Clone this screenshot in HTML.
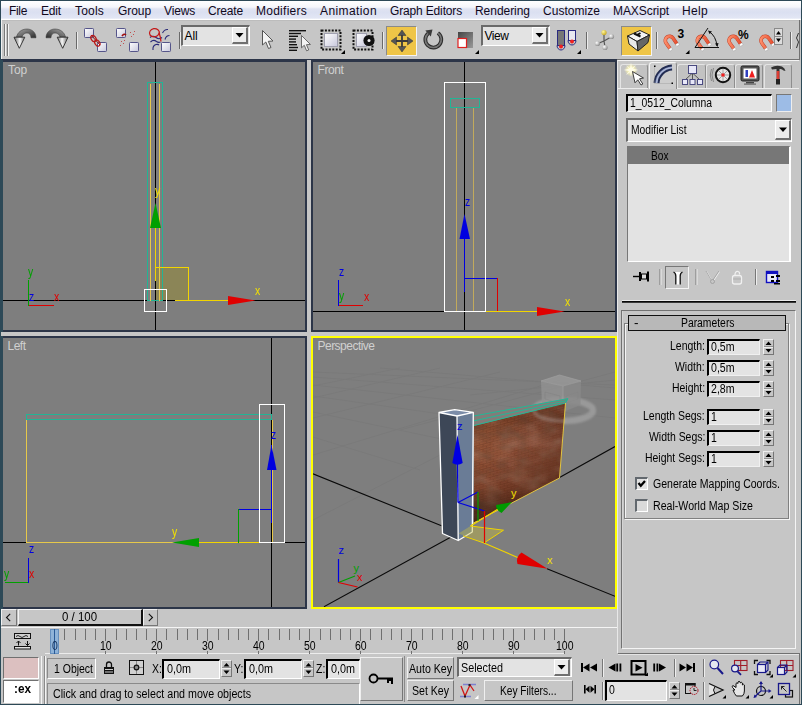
<!DOCTYPE html>
<html><head><meta charset="utf-8"><title>3ds Max</title>
<style>
html,body{margin:0;padding:0}
body{width:802px;height:705px;overflow:hidden;position:relative;background:#c6c6c6;font-family:"Liberation Sans",sans-serif}
.a{position:absolute}
.t{position:absolute;white-space:nowrap;line-height:normal}
svg{position:absolute;overflow:visible}
</style></head><body>

<div class="a" style="left:1px;top:1px;width:800px;height:19px;background:linear-gradient(#ffffff 0%,#f5f6fb 32%,#dfe3f2 42%,#dbe0f1 60%,#e2e6f4 90%,#ffffff 97%);"></div>
<span class="t" style="left:9.0px;top:4px;font-size:12px;color:#10081c;letter-spacing:-0.336px;">File</span>
<span class="t" style="left:41.0px;top:4px;font-size:12px;color:#10081c;letter-spacing:-0.168px;">Edit</span>
<span class="t" style="left:75.0px;top:4px;font-size:12px;color:#10081c;letter-spacing:0.197px;">Tools</span>
<span class="t" style="left:118.0px;top:4px;font-size:12px;color:#10081c;letter-spacing:-0.069px;">Group</span>
<span class="t" style="left:164.0px;top:4px;font-size:12px;color:#10081c;letter-spacing:-0.159px;">Views</span>
<span class="t" style="left:208.0px;top:4px;font-size:12px;color:#10081c;letter-spacing:-0.169px;">Create</span>
<span class="t" style="left:256.0px;top:4px;font-size:12px;color:#10081c;letter-spacing:0.257px;">Modifiers</span>
<span class="t" style="left:320.0px;top:4px;font-size:12px;color:#10081c;letter-spacing:0.405px;">Animation</span>
<span class="t" style="left:390.0px;top:4px;font-size:12px;color:#10081c;letter-spacing:-0.155px;">Graph Editors</span>
<span class="t" style="left:475.0px;top:4px;font-size:12px;color:#10081c;letter-spacing:-0.042px;">Rendering</span>
<span class="t" style="left:543.0px;top:4px;font-size:12px;color:#10081c;letter-spacing:0.035px;">Customize</span>
<span class="t" style="left:613.0px;top:4px;font-size:12px;color:#10081c;letter-spacing:-0.075px;">MAXScript</span>
<span class="t" style="left:682.0px;top:4px;font-size:12px;color:#10081c;letter-spacing:0.328px;">Help</span>
<div class="a" style="left:1px;top:20px;width:799px;height:39px;background:#c6c6c6;"></div>
<div class="a" style="left:1px;top:20px;width:799px;height:1px;background:#bcbcbc;"></div>
<div class="a" style="left:1px;top:20px;width:1px;height:39px;background:#f0f0f0;"></div>
<div class="a" style="left:799px;top:20px;width:1px;height:40px;background:#707070;"></div>
<div class="a" style="left:1px;top:59px;width:799px;height:1px;background:#707070;"></div>
<div class="a" style="left:4px;top:24px;width:1px;height:32px;background:#7a7a7a;"></div>
<div class="a" style="left:5px;top:24px;width:1px;height:32px;background:#f4f4f4;"></div>
<div class="a" style="left:7px;top:24px;width:1px;height:32px;background:#7a7a7a;"></div>
<div class="a" style="left:8px;top:24px;width:1px;height:32px;background:#f4f4f4;"></div>
<div class="a" style="left:76px;top:32px;width:1px;height:17px;background:#6a6a6a;"></div>
<div class="a" style="left:77px;top:32px;width:1px;height:17px;background:#ececec;"></div>
<div class="a" style="left:179px;top:32px;width:1px;height:17px;background:#6a6a6a;"></div>
<div class="a" style="left:180px;top:32px;width:1px;height:17px;background:#ececec;"></div>
<div class="a" style="left:382px;top:32px;width:1px;height:17px;background:#6a6a6a;"></div>
<div class="a" style="left:383px;top:32px;width:1px;height:17px;background:#ececec;"></div>
<div class="a" style="left:586px;top:32px;width:1px;height:17px;background:#6a6a6a;"></div>
<div class="a" style="left:587px;top:32px;width:1px;height:17px;background:#ececec;"></div>
<div class="a" style="left:656px;top:32px;width:1px;height:17px;background:#6a6a6a;"></div>
<div class="a" style="left:657px;top:32px;width:1px;height:17px;background:#ececec;"></div>
<div class="a" style="left:790px;top:32px;width:1px;height:17px;background:#6a6a6a;"></div>
<div class="a" style="left:791px;top:32px;width:1px;height:17px;background:#ececec;"></div>
<div class="a" style="left:386px;top:26px;width:31px;height:30px;background:#efc547;box-sizing:border-box;border-top:1px solid #8a8a8a;border-left:1px solid #8a8a8a;border-right:1px solid #f4f4f4;border-bottom:1px solid #f4f4f4"></div>
<div class="a" style="left:621px;top:26px;width:31px;height:30px;background:#efc547;box-sizing:border-box;border-top:1px solid #8a8a8a;border-left:1px solid #8a8a8a;border-right:1px solid #f4f4f4;border-bottom:1px solid #f4f4f4"></div>
<div class="a" style="left:181px;top:25px;width:69px;height:21px;background:#e3e3e3;box-sizing:border-box;border-top:2px solid #6a6a6a;border-left:2px solid #6a6a6a;border-right:1px solid #fff;border-bottom:1px solid #fff"></div>
<div class="a" style="left:232px;top:27px;width:16px;height:17px;background:#ececec;box-sizing:border-box;border-top:1px solid #fff;border-left:1px solid #fff;border-right:2px solid #707070;border-bottom:2px solid #707070"></div>
<svg style="left:232px;top:27px" width="16" height="17"><path d="M3.5 6.0h8l-4 4.5z" fill="#000"/></svg>
<span class="t" style="left:184.5px;top:29px;font-size:12px;color:#000;letter-spacing:-0.115px;">All</span>
<div class="a" style="left:481px;top:25px;width:69px;height:21px;background:#e3e3e3;box-sizing:border-box;border-top:2px solid #6a6a6a;border-left:2px solid #6a6a6a;border-right:1px solid #fff;border-bottom:1px solid #fff"></div>
<div class="a" style="left:532px;top:27px;width:16px;height:17px;background:#ececec;box-sizing:border-box;border-top:1px solid #fff;border-left:1px solid #fff;border-right:2px solid #707070;border-bottom:2px solid #707070"></div>
<svg style="left:532px;top:27px" width="16" height="17"><path d="M3.5 6.0h8l-4 4.5z" fill="#000"/></svg>
<span class="t" style="left:484.5px;top:29px;font-size:12px;color:#000;letter-spacing:-0.449px;">View</span>
<svg style="left:0;top:0" width="802" height="705" viewBox="0 0 802 705" >
<defs>
<linearGradient id="gArr" x1="1" y1="1" x2="0" y2="0"><stop offset="0" stop-color="#2a2a2a"/><stop offset=".35" stop-color="#555"/><stop offset="1" stop-color="#a8a8a8"/></linearGradient>
<linearGradient id="gArrH" x1="0" y1="0" x2="1" y2="0"><stop offset="0" stop-color="#6a6a6a"/><stop offset=".55" stop-color="#f6f6f6"/><stop offset="1" stop-color="#707070"/></linearGradient>
<linearGradient id="gBox" x1="0" y1="0" x2="1" y2="1"><stop offset="0" stop-color="#fff"/><stop offset="1" stop-color="#c8c8dc"/></linearGradient>
<linearGradient id="gMag" x1="0" y1="0" x2="1" y2="1"><stop offset="0" stop-color="#ff9470"/><stop offset="1" stop-color="#e85030"/></linearGradient>
<radialGradient id="gBall" cx=".35" cy=".35" r=".7"><stop offset="0" stop-color="#fff"/><stop offset="1" stop-color="#888"/></radialGradient>
<radialGradient id="gBallY" cx=".35" cy=".35" r=".7"><stop offset="0" stop-color="#fff8a0"/><stop offset="1" stop-color="#c8a820"/></radialGradient>
<linearGradient id="gScale" x1="0" y1="0" x2="1" y2="1"><stop offset="0" stop-color="#444"/><stop offset="1" stop-color="#9a9a9a"/></linearGradient>
</defs>
<g><path d="M36 37.800 C36 32.500 32 29 27 29 C21.500 29 17.500 32.500 16.500 37 L22 37.200 C22.500 34.600 24.500 33 27 33 C29.500 33 31 35 31 37.800 Z" fill="url(#gArr)" stroke="#333" stroke-width=".5"/><path d="M14 37.200 L24.800 37.200 L19.300 48.300 Z" fill="url(#gArrH)" stroke="#2a2a2a" stroke-width=".9" stroke-linejoin="round"/></g>
<g transform="translate(82,0) scale(-1,1)"><path d="M36 37.800 C36 32.500 32 29 27 29 C21.500 29 17.500 32.500 16.500 37 L22 37.200 C22.500 34.600 24.500 33 27 33 C29.500 33 31 35 31 37.800 Z" fill="url(#gArr)" stroke="#333" stroke-width=".5"/><path d="M14 37.200 L24.800 37.200 L19.300 48.300 Z" fill="url(#gArrH)" stroke="#2a2a2a" stroke-width=".9" stroke-linejoin="round"/></g>
<rect x="84.5" y="28.5" width="9" height="9" fill="url(#gBox)" stroke="#55558a" stroke-width="1" rx=".8"/>
<rect x="97.5" y="42.5" width="9" height="9" fill="url(#gBox)" stroke="#55558a" stroke-width="1" rx=".8"/>
<path d="M91 35 l9 10" stroke="#8a1010" stroke-width="1" fill="none"/><ellipse cx="93.500" cy="38.500" rx="2.300" ry="3.400" transform="rotate(-35 93.5 38.5)" fill="none" stroke="#b81818" stroke-width="1.200"/><ellipse cx="97.300" cy="43" rx="2.300" ry="3.400" transform="rotate(-35 97.3 43)" fill="none" stroke="#b81818" stroke-width="1.200"/>
<rect x="116.5" y="28.5" width="9" height="9" fill="url(#gBox)" stroke="#55558a" stroke-width="1" rx=".8"/>
<rect x="129.5" y="42.5" width="9" height="9" fill="url(#gBox)" stroke="#55558a" stroke-width="1" rx=".8"/>
<path d="M122 36 q2 -3 4 -1" stroke="#a01010" stroke-width="1.6" fill="none"/><g fill="#c05050"><rect x="130" y="32" width="1" height="1"/><rect x="133" y="34" width="1" height="1"/><rect x="131" y="36" width="1" height="1"/><rect x="134" y="31" width="1" height="1"/><rect x="121" y="41" width="1" height="1"/><rect x="123" y="43" width="1" height="1"/><rect x="120" y="45" width="1" height="1"/><rect x="124" y="40" width="1" height="1"/></g>
<g fill="none" stroke="#2a2a78" stroke-width="1.100"><path d="M150 37.500 q3 -2.500 6 0 t6 0"/><path d="M150.500 42 q3 -3 6 -.5 q2 1.500 4 .5"/><path d="M153 50 q-.5 -4.500 3 -5.500 q2 -.5 3 .5"/><path d="M162.500 33 q2 -4 5.500 -3.500"/><path d="M165 39.500 q1 -4 4.500 -4"/></g><path d="M159.500 33.500 a5 4.500 0 1 0 -9.500 1.500 a5 4.500 0 0 0 9 -2.500 q1.500 4.500 2 9" fill="none" stroke="#c41818" stroke-width="1.200"/>
<rect x="161.5" y="42.5" width="9" height="9" fill="url(#gBox)" stroke="#55558a" stroke-width="1" rx=".8"/>
<path transform="translate(262.5,30.5) scale(1.0)" d="M0 0 L0 14.500 L3.300 11.500 L6 18 L8.500 17 L5.800 10.800 L10.500 10.500 Z" fill="#f4f4f4" stroke="#555" stroke-width="1"/>
<g fill="#111"><rect x="289" y="30" width="17" height="1.4"/><rect x="289" y="32.8" width="12" height="1.4"/><rect x="289" y="35.6" width="9" height="1.4"/><rect x="289" y="38.4" width="7" height="1.4"/><rect x="289" y="41.2" width="7" height="1.4"/><rect x="289" y="44" width="8" height="1.4"/><rect x="289" y="46.8" width="9" height="1.4"/><rect x="289" y="49.6" width="8" height="1.4"/></g>
<path transform="translate(301.5,35.5) scale(0.85)" d="M0 0 L0 14.500 L3.300 11.500 L6 18 L8.500 17 L5.800 10.800 L10.500 10.500 Z" fill="#f4f4f4" stroke="#555" stroke-width="1"/>
<rect x="321.5" y="30.5" width="19" height="19" fill="none" stroke="#111" stroke-width="2" stroke-dasharray="2 1.4"/>
<rect x="324.5" y="33.5" width="13" height="13" fill="url(#gBox)" stroke="#a0a0b0"/>
<path d="M345 50 v4 h-4 z" fill="#000"/>
<rect x="353.5" y="30.5" width="19" height="19" fill="none" stroke="#111" stroke-width="2" stroke-dasharray="2 1.4"/>
<rect x="356.5" y="33.5" width="10" height="13" fill="url(#gBox)" stroke="#a0a0b0"/>
<circle cx="369" cy="40.500" r="5.600" fill="#111"/><circle cx="369" cy="40.500" r="1.500" fill="#f0f0f0"/>
<g fill="#555" stroke="#333" stroke-width=".5"><path d="M402 30 l4 5.500 h-8z"/><path d="M402 52 l4 -5.500 h-8z"/><path d="M391 41 l5.500 -4 v8z"/><path d="M413 41 l-5.500 -4 v8z"/></g><path d="M402 35 v12 M396 41 h12" stroke="#3a3a3a" stroke-width="1.8"/>
<path d="M437.900 33 A8 8 0 1 1 428.200 33.400" fill="none" stroke="#2e2e2e" stroke-width="3.800"/><path d="M437.900 33 A8 8 0 1 1 428.200 33.400" fill="none" stroke="#777" stroke-width="1.600"/><path d="M432.500 29.600 L430.800 36.600 L425.300 30.600 Z" fill="#3a3a3a"/>
<rect x="458" y="32" width="15" height="16" fill="url(#gScale)"/><rect x="458" y="38.500" width="8.500" height="9" fill="#fff" stroke="#e02020" stroke-width="1.2"/>
<path d="M479 50 v4 h-4 z" fill="#000"/>
<rect x="557.500" y="30.500" width="7" height="15" fill="#777" stroke="#2a2a80"/><path d="M557 45.500 a4 4.500 0 0 0 8 0" fill="none" stroke="#2a2a80"/><circle cx="561" cy="46.500" r="2" fill="#f02020"/>
<rect x="568.500" y="30.500" width="7" height="10" fill="#e8e8f0" stroke="#2a2a80"/><path d="M568 40.500 a4 4.500 0 0 0 8 0" fill="none" stroke="#2a2a80"/><circle cx="572" cy="41.500" r="2" fill="#f02020"/>
<path d="M581 50 v4 h-4 z" fill="#000"/>
<path d="M604 41 L604 33 M604 41 L611 37 M604 41 L598 43.500 M604 41 L605 47" stroke="#555" stroke-width="1.2"/><circle cx="604" cy="32.500" r="2.600" fill="url(#gBallY)"/><circle cx="611.500" cy="36.500" r="2.600" fill="url(#gBall)"/><circle cx="597.500" cy="43.500" r="2.600" fill="url(#gBall)"/><circle cx="605" cy="47.500" r="2.600" fill="url(#gBall)"/>
<path d="M627.500 36 L640 30.500 L649.500 35 L637 41.500 Z" fill="#f4f4f4" stroke="#222" stroke-width="1"/><path d="M627.500 36 L637 41.500 L638 51 L629 44 Z" fill="#e8e8e8" stroke="#222"/><path d="M637 41.500 L649.500 35 L648 42.500 L638 51 Z" fill="#666" stroke="#222"/><path d="M634 33.500 l6.500 3 M637 35 l3.500 -2" stroke="#111" stroke-width="2"/>
<g transform="translate(669.5,40.5) rotate(-35)"><path d="M-4.200 6.800 V0 A4.200 4.200 0 0 1 4.200 0 V6.800" fill="none" stroke="#c04028" stroke-width="3.600"/><path d="M-4.200 6.800 V0 A4.200 4.200 0 0 1 4.200 0 V6.800" fill="none" stroke="url(#gMag)" stroke-width="2.600"/><rect x="-5.800" y="6.800" width="3.200" height="2.200" fill="#fff" stroke="#888" stroke-width=".3"/><rect x="2.600" y="6.800" width="3.200" height="2.200" fill="#fff" stroke="#888" stroke-width=".3"/></g>
<text x="677.5" y="38" font-size="12" fill="#000" font-weight="bold" >3</text>
<path d="M689.500 50 v4 h-4 z" fill="#000"/>
<g transform="translate(701.5,40.5) rotate(-35)"><path d="M-4.200 6.800 V0 A4.200 4.200 0 0 1 4.200 0 V6.800" fill="none" stroke="#c04028" stroke-width="3.600"/><path d="M-4.200 6.800 V0 A4.200 4.200 0 0 1 4.200 0 V6.800" fill="none" stroke="url(#gMag)" stroke-width="2.600"/><rect x="-5.800" y="6.800" width="3.200" height="2.200" fill="#fff" stroke="#888" stroke-width=".3"/><rect x="2.600" y="6.800" width="3.200" height="2.200" fill="#fff" stroke="#888" stroke-width=".3"/></g>
<path d="M695 47.500 H719 M695 47.500 L708 28" stroke="#111" stroke-width="1" fill="none"/><path d="M709 31.500 Q716 36 717 46" stroke="#111" fill="none"/><path d="M708 30.500 l4 1 l-2.500 2.500z M717.500 47 l-2.500 -3.500 l3.500 -.5z" fill="#111"/>
<g transform="translate(733.2,40.5) rotate(-35)"><path d="M-4.200 6.800 V0 A4.200 4.200 0 0 1 4.200 0 V6.800" fill="none" stroke="#c04028" stroke-width="3.600"/><path d="M-4.200 6.800 V0 A4.200 4.200 0 0 1 4.200 0 V6.800" fill="none" stroke="url(#gMag)" stroke-width="2.600"/><rect x="-5.800" y="6.800" width="3.200" height="2.200" fill="#fff" stroke="#888" stroke-width=".3"/><rect x="2.600" y="6.800" width="3.200" height="2.200" fill="#fff" stroke="#888" stroke-width=".3"/></g>
<text x="738" y="39" font-size="12" fill="#000" font-weight="bold" >%</text>
<g transform="translate(765.2,40.5) rotate(-35)"><path d="M-4.200 6.800 V0 A4.200 4.200 0 0 1 4.200 0 V6.800" fill="none" stroke="#c04028" stroke-width="3.600"/><path d="M-4.200 6.800 V0 A4.200 4.200 0 0 1 4.200 0 V6.800" fill="none" stroke="url(#gMag)" stroke-width="2.600"/><rect x="-5.800" y="6.800" width="3.200" height="2.200" fill="#fff" stroke="#888" stroke-width=".3"/><rect x="2.600" y="6.800" width="3.200" height="2.200" fill="#fff" stroke="#888" stroke-width=".3"/></g>
<rect x="774" y="28" width="9" height="17" fill="#8a8a8a"/><rect x="775" y="29" width="7" height="7" fill="#ddd"/><rect x="775" y="37" width="7" height="7" fill="#ddd"/><path d="M776 34.500 h5 l-2.500 -3.500z M776 38.500 h5 l-2.500 3.500z" fill="#000"/>
<path d="M798.500 33 l-2 5 l2 4 l-2 6" stroke="#333" fill="none"/>
</svg>
<div class="a" style="left:0px;top:59px;width:307px;height:273px;background:#2c3548;"></div>
<div class="a" style="left:3px;top:62px;width:302px;height:268px;background:#7e7e7e;"></div>
<div class="a" style="left:311px;top:59px;width:306px;height:273px;background:#2c3548;"></div>
<div class="a" style="left:313px;top:62px;width:302px;height:268px;background:#7e7e7e;"></div>
<div class="a" style="left:0px;top:336px;width:307px;height:273px;background:#2c3548;"></div>
<div class="a" style="left:3px;top:338px;width:302px;height:269px;background:#7e7e7e;"></div>
<div class="a" style="left:311px;top:336px;width:306px;height:273px;background:#ffff00;"></div>
<div class="a" style="left:313px;top:338px;width:302px;height:269px;background:#7e7e7e;"></div>
<div class="a" style="left:0px;top:59px;width:3px;height:550px;background:#2d4957;"></div>
<div class="a" style="left:1px;top:59px;width:616px;height:1px;background:#2c3548;"></div>
<div class="a" style="left:1px;top:332px;width:2px;height:4px;background:#c6c6c6;"></div>
<span class="t" style="left:8.0px;top:63px;font-size:12px;color:#d0d0d0;letter-spacing:-0.115px;">Top</span>
<span class="t" style="left:317.5px;top:63px;font-size:12px;color:#d0d0d0;letter-spacing:-0.400px;">Front</span>
<span class="t" style="left:7.5px;top:339px;font-size:12px;color:#d0d0d0;letter-spacing:-0.500px;">Left</span>
<span class="t" style="left:317.5px;top:339px;font-size:12px;color:#d0d0d0;letter-spacing:-0.517px;">Perspective</span>
<svg style="left:0;top:0" width="802" height="705" viewBox="0 0 802 705" shape-rendering="crispEdges">
<rect x="155" y="62" width="1" height="268" fill="#000"/>
<rect x="3" y="300" width="302" height="1" fill="#000"/>
<rect x="156" y="268" width="32" height="32" fill="#8b8557"/>
<rect x="147.5" y="82.5" width="15" height="218" fill="none" stroke="#22b595" stroke-width="1"/>
<rect x="150" y="84" width="1" height="217" fill="#e6c84a"/>
<rect x="159" y="84" width="1" height="217" fill="#e6c84a"/>
<rect x="155" y="228" width="1" height="53" fill="#f2d500"/>
<rect x="155" y="267" width="34" height="1" fill="#f2d500"/>
<rect x="188" y="267" width="1" height="34" fill="#f2d500"/>
<rect x="175" y="300" width="53" height="1" fill="#f2d500"/>
<rect x="144.5" y="289.5" width="22" height="22" fill="none" stroke="#fff" stroke-width="1"/>
<path d="M155.500 203 L150 228 H161 Z" fill="#00a000" shape-rendering="auto"/>
<path d="M255.500 300.500 L228 296 V305 Z" fill="#e00000" shape-rendering="auto"/>
<rect x="28" y="280" width="1" height="26" fill="#00a000"/>
<rect x="29" y="305" width="25" height="1" fill="#e00000"/>
<rect x="464" y="62" width="1" height="268" fill="#000"/>
<rect x="313" y="311" width="302" height="1" fill="#000"/>
<rect x="456" y="107" width="1" height="205" fill="#c2aa5c"/>
<rect x="473" y="107" width="1" height="205" fill="#c2aa5c"/>
<rect x="450.5" y="98.5" width="29" height="9" fill="none" stroke="#22b595" stroke-width="1"/>
<rect x="464" y="238" width="1" height="54" fill="#0000e0"/>
<rect x="464" y="278" width="34" height="1" fill="#0000e0"/>
<rect x="497" y="278" width="1" height="34" fill="#e00000"/>
<rect x="485" y="311" width="53" height="1" fill="#f2d500"/>
<rect x="444.5" y="82.5" width="41" height="229" fill="none" stroke="#fff" stroke-width="1"/>
<path d="M464.500 214 L459.500 239 H470 Z" fill="#0000e0" shape-rendering="auto"/>
<path d="M564.500 311.500 L537 307 V316 Z" fill="#e00000" shape-rendering="auto"/>
<rect x="338" y="280" width="1" height="26" fill="#0000e0"/>
<rect x="339" y="305" width="24" height="1" fill="#e00000"/>
<rect x="271" y="338" width="1" height="269" fill="#000"/>
<rect x="3" y="542" width="302" height="1" fill="#000"/>
<rect x="26" y="542" width="233" height="1" fill="#e6c84a"/>
<rect x="26" y="420" width="1" height="123" fill="#e6c84a"/>
<rect x="272" y="420" width="1" height="123" fill="#e6c84a"/>
<rect x="26.5" y="414.5" width="245" height="5" fill="none" stroke="#22b595" stroke-width="1"/>
<rect x="199" y="542" width="61" height="1" fill="#f2d500"/>
<rect x="271" y="445" width="1" height="78" fill="#0000e0"/>
<rect x="238" y="509" width="34" height="1" fill="#0000e0"/>
<rect x="238" y="509" width="1" height="34" fill="#00a000"/>
<rect x="259.5" y="404.5" width="25" height="138" fill="none" stroke="#fff" stroke-width="1"/>
<path d="M271.500 445 L267 470 H276.500 Z" fill="#0000e0" shape-rendering="auto"/>
<path d="M172 542.500 L199 538 V547 Z" fill="#00a000" shape-rendering="auto"/>
<rect x="28" y="558" width="1" height="25" fill="#0000e0"/>
<rect x="5" y="582" width="23" height="1" fill="#00a000"/>
</svg>
<span class="t" style="left:155.0px;top:184px;font-size:12px;color:#f2e000;transform:scaleX(0.8708);transform-origin:0 0;">y</span>
<span class="t" style="left:254.5px;top:284px;font-size:12px;color:#f2e000;transform:scaleX(0.8708);transform-origin:0 0;">x</span>
<span class="t" style="left:28.0px;top:265px;font-size:12px;color:#00a000;transform:scaleX(0.8708);transform-origin:0 0;">y</span>
<span class="t" style="left:28.5px;top:290px;font-size:12px;color:#0000e0;transform:scaleX(0.8708);transform-origin:0 0;">z</span>
<span class="t" style="left:53.5px;top:290px;font-size:12px;color:#e00000;transform:scaleX(0.8708);transform-origin:0 0;">x</span>
<span class="t" style="left:464.5px;top:195px;font-size:12px;color:#0000e0;transform:scaleX(0.8708);transform-origin:0 0;">z</span>
<span class="t" style="left:564.5px;top:295px;font-size:12px;color:#f2e000;transform:scaleX(0.8708);transform-origin:0 0;">x</span>
<span class="t" style="left:338.5px;top:265px;font-size:12px;color:#0000e0;transform:scaleX(0.8708);transform-origin:0 0;">z</span>
<span class="t" style="left:339.0px;top:289px;font-size:12px;color:#00a000;transform:scaleX(0.8708);transform-origin:0 0;">y</span>
<span class="t" style="left:363.5px;top:290px;font-size:12px;color:#e00000;transform:scaleX(0.8708);transform-origin:0 0;">x</span>
<span class="t" style="left:270.5px;top:428px;font-size:12px;color:#0000e0;transform:scaleX(0.8708);transform-origin:0 0;">z</span>
<span class="t" style="left:171.5px;top:525px;font-size:12px;color:#f2e000;transform:scaleX(0.8708);transform-origin:0 0;">y</span>
<span class="t" style="left:28.5px;top:542px;font-size:12px;color:#0000e0;transform:scaleX(0.8708);transform-origin:0 0;">z</span>
<span class="t" style="left:4.0px;top:567px;font-size:12px;color:#00a000;transform:scaleX(0.8708);transform-origin:0 0;">y</span>
<span class="t" style="left:28.5px;top:567px;font-size:12px;color:#e00000;transform:scaleX(0.8708);transform-origin:0 0;">x</span>
<svg style="left:313px;top:338px;overflow:hidden" width="302" height="269" viewBox="313 338 302 269">
<defs>
<linearGradient id="gWall" x1="474" y1="430" x2="560" y2="500" gradientUnits="userSpaceOnUse"><stop offset="0" stop-color="#93502f"/><stop offset=".4" stop-color="#874830"/><stop offset=".75" stop-color="#6c3622"/><stop offset="1" stop-color="#5a2c1a"/></linearGradient>
<linearGradient id="gWallShade" x1="474" y1="420" x2="474" y2="525" gradientUnits="userSpaceOnUse"><stop offset="0" stop-color="#000" stop-opacity=".12"/><stop offset=".3" stop-color="#fff" stop-opacity=".03"/><stop offset=".65" stop-color="#000" stop-opacity=".05"/><stop offset="1" stop-color="#1a0600" stop-opacity=".6"/></linearGradient>
<pattern id="pBrick" width="7" height="5" patternUnits="userSpaceOnUse" patternTransform="matrix(1 -0.26 0 1 474 426)"><rect width="7" height="5" fill="none"/><path d="M0 .5H7 M0 3H7 M2 .5V3 M5.500 3V5" stroke="#5e2c18" stroke-width=".7" stroke-opacity=".55"/></pattern>
<filter id="fBlur" x="-20%" y="-20%" width="140%" height="140%"><feGaussianBlur stdDeviation="1.200"/></filter>
<filter id="fBlur2" x="-20%" y="-20%" width="140%" height="140%"><feGaussianBlur stdDeviation="2.500"/></filter>
<filter id="fGrunge" x="0" y="0" width="100%" height="100%"><feTurbulence type="fractalNoise" baseFrequency="0.07 0.1" numOctaves="3" seed="11"/><feColorMatrix type="matrix" values="0 0 0 0 0.16  0 0 0 0 0.06  0 0 0 0 0.03  0 0 0 1.8 -0.72"/><feComposite in2="SourceAlpha" operator="in"/></filter>
<filter id="fGrungeL" x="0" y="0" width="100%" height="100%"><feTurbulence type="fractalNoise" baseFrequency="0.05 0.08" numOctaves="2" seed="3"/><feColorMatrix type="matrix" values="0 0 0 0 0.78  0 0 0 0 0.55  0 0 0 0 0.45  0 0 0 1.8 -0.8"/><feComposite in2="SourceAlpha" operator="in"/></filter>
</defs>
<g stroke="#777777" stroke-width="1" fill="none" opacity=".55">
<path d="M313 437L420 470"/>
<path d="M313 412L470 445"/>
<path d="M313 396L540 428"/>
<path d="M313 385L615 418"/>
<path d="M313 377L615 400"/>
<path d="M380 368L615 388"/>
<path d="M313 372L615 385"/>
<path d="M313 520L440 455"/>
<path d="M313 455L560 380"/>
<path d="M313 418L500 372"/>
<path d="M313 398L440 368"/>
<path d="M400 430L615 372"/>
<path d="M470 395L615 380"/>
<path d="M313 386L400 368"/>
</g>
<path d="M313 473.800 L441.500 525.800 M547 568.700 L615 596.300" stroke="#0a0a0a" stroke-width="1.100" fill="none"/>
<path d="M324 606.700 L451 537 M559.500 477.500 L615 446.500" stroke="#0a0a0a" stroke-width="1.100" fill="none"/>
<ellipse cx="563.500" cy="410.500" rx="29.500" ry="10.500" fill="none" stroke="#a0a0a0" stroke-width="6.500" opacity=".8" filter="url(#fBlur)"/>
<g opacity=".8"><path d="M541 381 L559.500 375 L581 381 L563 386 Z" fill="#9a9a9a"/><path d="M541 381 L563 386 L563 412 L542 405 Z" fill="#929292"/><path d="M563 386 L581 381 L580.500 405 L563 412 Z" fill="#8a8a8a"/><path d="M541 381 L559.500 375 L581 381 L563 386 Z M563 386 V412" fill="none" stroke="#a8a8a8" stroke-width=".7"/><path d="M545 392 L560 396 V403 L545 399 Z M566 396 L578 392 V399 L566 403Z" fill="none" stroke="#858585" stroke-width=".6"/></g>
<path d="M474 416 L568 398.600 L565.500 403 L474 426 Z" fill="#827c79"/>
<path d="M474 426 L565.500 403 L559.500 478 L474 522.500 Z" fill="url(#gWall)"/>
<path d="M474 426 L565.500 403 L559.500 478 L474 522.500 Z" fill="url(#pBrick)"/>
<path d="M474 426 L565.500 403 L559.500 478 L474 522.500 Z" fill="#000" filter="url(#fGrunge)"/>
<path d="M474 426 L565.500 403 L559.500 478 L474 522.500 Z" fill="#000" filter="url(#fGrungeL)" opacity=".22"/>
<path d="M474 426 L565.500 403 L559.500 478 L474 522.500 Z" fill="url(#gWallShade)"/>
<g filter="url(#fBlur2)" opacity=".12"><ellipse cx="500" cy="452" rx="12" ry="6" fill="#b87858"/><ellipse cx="535" cy="440" rx="10" ry="8" fill="#b07058"/><ellipse cx="520" cy="475" rx="12" ry="6" fill="#a86a50"/><ellipse cx="548" cy="420" rx="8" ry="6" fill="#a89088"/><ellipse cx="488" cy="490" rx="8" ry="7" fill="#6a3018"/></g>
<path d="M534 410.500 A30 10.500 0 0 0 566 421" fill="none" stroke="#b0a8a4" stroke-width="4" opacity=".35" filter="url(#fBlur)"/>
<g stroke="#22b896" stroke-width="1" fill="none"><path d="M474 416 L568 398.600 L565.500 403"/><path d="M474 420.800 L567 400.600"/><path d="M474 425.500 L565.500 403"/></g>
<path d="M565.500 403 L559.500 478 L470 524.800" fill="none" stroke="#ecd040" stroke-width=".9"/>
<path d="M439 412.500 L457 416 L458.200 540.500 L442.500 533.500 Z" fill="#3d4757"/>
<path d="M457 416 L473.300 412.300 L472.300 532 L458.200 540.500 Z" fill="#6a7c96"/>
<path d="M439 412.500 L454.700 409.700 L473.300 412.300 L457 416 Z" fill="#7b8ca8"/>
<path d="M439 412.500 L454.700 409.700 L473.300 412.300 L472.300 532 L458.200 540.500 L442.500 533.500 Z M439 412.500 L457 416 L473.300 412.300 M457 416 L458.200 540.500" fill="none" stroke="#fff" stroke-width="1.300" stroke-linejoin="round"/>
<path d="M458.500 533.500 L470.500 526 L503.500 530.200 L484 543 Z" fill="#c8bc40" fill-opacity=".42"/>
<path d="M470.500 526 L503.500 530.200 L484 543 L463 535.800" fill="none" stroke="#f0d400" stroke-width="1"/>
<path d="M470.500 526 L499 508.500" stroke="#f0d400" stroke-width="1.300"/>
<path d="M484 543 L520 558.500" stroke="#f0d400" stroke-width="1.200"/>
<path d="M457.500 464 L458 502.500" stroke="#0000e0" stroke-width="1.300"/>
<path d="M458 502.500 L478 492 M458 502.500 L484.500 511" stroke="#0000e0" stroke-width="1.200" fill="none"/>
<path d="M478 492 V521" stroke="#00a000" stroke-width="1.200"/>
<path d="M484.500 511 V543" stroke="#e00000" stroke-width="1.200"/>
<path d="M457.500 435 L452.300 463 Q457.500 466.500 462.700 463 Z" fill="#0000e0"/>
<path d="M512 502 L496 505 Q496 510 501.500 513 Z" fill="#009a00"/>
<path d="M547.500 568.800 L521.500 552.500 Q515.500 557 517.500 564 Z" fill="#e00000"/>
<path d="M338.500 559 V582.500" stroke="#0000e0" stroke-width="1.200"/><path d="M338.500 582.500 L355 576" stroke="#00a000" stroke-width="1.200"/><path d="M338.500 582.500 L357.500 587" stroke="#e00000" stroke-width="1.200"/>
<text x="457" y="430" font-size="11" fill="#0000e0" >z</text>
<text x="511" y="497" font-size="11" fill="#f2e000" >y</text>
<text x="547" y="564" font-size="11" fill="#f2e000" >x</text>
<text x="338.5" y="554" font-size="11" fill="#0000e0" >z</text>
<text x="353.5" y="572" font-size="11" fill="#00a000" >y</text>
<text x="357" y="581" font-size="11" fill="#e00000" >x</text>
</svg>
<div class="a" style="left:617px;top:59px;width:184px;height:594px;background:#c6c6c6;"></div>
<div class="a" style="left:617px;top:59px;width:183px;height:1px;background:#727272;"></div>
<div class="a" style="left:617px;top:60px;width:182px;height:1px;background:#f4f4f4;"></div>
<div class="a" style="left:617px;top:60px;width:1px;height:593px;background:#e8e8e8;"></div>
<div class="a" style="left:620px;top:64px;width:28px;height:24px;background:#c2c2c2;box-sizing:border-box;border-top:1px solid #e4e4e4;border-left:1px solid #e4e4e4;border-right:1px solid #8e8e8e;border-radius:3px 3px 0 0"></div>
<div class="a" style="left:649px;top:62px;width:28px;height:27px;background:#cdcdcd;box-sizing:border-box;border-top:1px solid #f4f4f4;border-left:1px solid #f4f4f4;border-right:1px solid #8a8a8a;border-radius:3px 3px 0 0"></div>
<div class="a" style="left:677px;top:64px;width:29px;height:24px;background:#c2c2c2;box-sizing:border-box;border-top:1px solid #e4e4e4;border-left:1px solid #e4e4e4;border-right:1px solid #8e8e8e;border-radius:3px 3px 0 0"></div>
<div class="a" style="left:706px;top:64px;width:29px;height:24px;background:#c2c2c2;box-sizing:border-box;border-top:1px solid #e4e4e4;border-left:1px solid #e4e4e4;border-right:1px solid #8e8e8e;border-radius:3px 3px 0 0"></div>
<div class="a" style="left:735px;top:64px;width:28px;height:24px;background:#c2c2c2;box-sizing:border-box;border-top:1px solid #e4e4e4;border-left:1px solid #e4e4e4;border-right:1px solid #8e8e8e;border-radius:3px 3px 0 0"></div>
<div class="a" style="left:764px;top:64px;width:28px;height:24px;background:#c2c2c2;box-sizing:border-box;border-top:1px solid #e4e4e4;border-left:1px solid #e4e4e4;border-right:1px solid #8e8e8e;border-radius:3px 3px 0 0"></div>
<div class="a" style="left:618px;top:88px;width:30px;height:1px;background:#ececec;"></div>
<div class="a" style="left:677px;top:88px;width:122px;height:1px;background:#ececec;"></div>
<svg style="left:0;top:0" width="802" height="705" viewBox="0 0 802 705" >
<defs>
<radialGradient id="gStar"><stop offset="0" stop-color="#fffde0"/><stop offset=".5" stop-color="#fff8b0" stop-opacity=".8"/><stop offset="1" stop-color="#fff8b0" stop-opacity="0"/></radialGradient>
<linearGradient id="gArc" x1="0" y1="0" x2="1" y2="1"><stop offset="0" stop-color="#9ab"/><stop offset=".5" stop-color="#2a3860"/><stop offset="1" stop-color="#7888b0"/></linearGradient>
<linearGradient id="gHam" x1="0" y1="0" x2="1" y2="0"><stop offset="0" stop-color="#a02020"/><stop offset=".5" stop-color="#ff5040"/><stop offset="1" stop-color="#801010"/></linearGradient>
</defs>
<circle cx="631" cy="70" r="6.500" fill="url(#gStar)"/><path d="M631 62.500 L632 68.500 L638.500 70 L632 71.200 L631 77 L630 71.200 L623.500 70 L630 68.500Z M626 65 L630.500 69 L636 65 L632 70 L636 75 L631 71.500 L626 75 L630 70Z" fill="#fffde8"/>
<path d="M632.500 71.500 L643.500 78 L639.500 78.800 L642.800 84 L641 85 L637.800 79.800 L635 82.800 Z" fill="#fff" stroke="#2a2a2a" stroke-width=".9"/>
<path d="M656.500 83 A16.500 16.500 0 0 1 672 67.500" fill="none" stroke="#222c52" stroke-width="6"/><path d="M656.500 83 A16.500 16.500 0 0 1 672 67.500" fill="none" stroke="#8e9cc4" stroke-width="2.200"/><path d="M656.500 83 A16.500 16.500 0 0 1 672 67.500" fill="none" stroke="#c4cce4" stroke-width=".7"/><path d="M654.500 66.500 V83.500 H672.500" fill="none" stroke="#888" stroke-width=".6" stroke-dasharray="1 1"/><rect x="654" y="65.500" width="1.500" height="1.500" fill="#000"/><rect x="671.500" y="82.500" width="1.500" height="1.500" fill="#000"/>
<g stroke="#4a4a80" fill="#e8e8f8" stroke-width="1"><path d="M692.500 73 V79 M692.500 73 L685 80 M692.500 73 L700 80" fill="none" stroke="#555"/><rect x="688.500" y="65.500" width="8" height="8"/><rect x="682.500" y="79.500" width="5" height="5"/><rect x="690" y="79.500" width="5" height="5"/><rect x="697.500" y="79.500" width="5" height="5"/></g>
<circle cx="723" cy="75" r="7.200" fill="#e8e8e8" stroke="#111" stroke-width="2"/><path d="M723 69 V81 M717 75 H729 M719 71 L727 79 M727 71 L719 79" stroke="#888" stroke-width=".7"/><circle cx="723" cy="75" r="1.800" fill="#f02020"/><path d="M713.500 68 Q710.500 75 713.500 82 M711.500 69 Q709 75 711.500 81" stroke="#777" fill="none" stroke-width=".8"/>
<rect x="741" y="66" width="18" height="15" rx="1.500" fill="#555" stroke="#222"/><rect x="743.500" y="68.500" width="13" height="10" fill="#fff"/><rect x="745.500" y="70" width="2.500" height="7" fill="#3040c0"/><path d="M749 77.500 L752 70 L755 77.500Z" fill="#f02020"/><rect x="746" y="82" width="8" height="1.500" fill="#444"/><rect x="744" y="83.500" width="12" height="1.200" fill="#666"/>
<path d="M771 67.500 Q776 64.500 782 66.500 Q785 68 785.500 71 L783.500 70.500 Q782 68.500 779.500 69 L779.500 71 L776.500 71 L776.500 69 L772 69.500 Z" fill="#333"/><rect x="776.500" y="71" width="3" height="9" fill="url(#gHam)"/><rect x="776" y="79" width="4" height="5.500" fill="#222"/>
</svg>
<div class="a" style="left:626px;top:94px;width:146px;height:18px;background:#e3e3e3;box-sizing:border-box;border-top:2px solid #000;border-left:2px solid #000;border-right:1px solid #fff;border-bottom:1px solid #fff"></div>
<span class="t" style="left:630.0px;top:96px;font-size:12px;color:#000;transform:scaleX(0.8656);transform-origin:0 0;">1_0512_Columna</span>
<div class="a" style="left:776px;top:94px;width:16px;height:18px;background:#9dbce6;box-sizing:border-box;border-top:1px solid #777;border-left:1px solid #777;border-right:1px solid #eee;border-bottom:1px solid #eee"></div>
<div class="a" style="left:626px;top:118px;width:166px;height:24px;background:#e3e3e3;box-sizing:border-box;border-top:2px solid #6a6a6a;border-left:2px solid #6a6a6a;border-right:1px solid #fff;border-bottom:1px solid #fff"></div>
<div class="a" style="left:775px;top:120px;width:16px;height:20px;background:#ececec;box-sizing:border-box;border-top:1px solid #fff;border-left:1px solid #fff;border-right:2px solid #707070;border-bottom:2px solid #707070"></div>
<svg style="left:775px;top:120px" width="16" height="20"><path d="M4 7.500h8l-4 4.500z" fill="#000"/></svg>
<span class="t" style="left:630.5px;top:123px;font-size:12px;color:#000;transform:scaleX(0.8580);transform-origin:0 0;">Modifier List</span>
<div class="a" style="left:627px;top:146px;width:164px;height:116px;background:#e3e3e3;box-sizing:border-box;border-top:1px solid #777;border-left:1px solid #777;border-right:2px solid #fff;border-bottom:1px solid #fff"></div>
<div class="a" style="left:628px;top:147px;width:161px;height:17px;background:#777;"></div>
<span class="t" style="left:650.5px;top:149px;font-size:12px;color:#000;transform:scaleX(0.8466);transform-origin:0 0;">Box</span>
<svg style="left:0;top:0" width="802" height="705" viewBox="0 0 802 705" >
<path d="M633 276.500 H639" stroke="#000" stroke-width="1.400"/><path d="M639 272 h2 v1.500 h6 v-2 h2 v10 h-2 v-2 h-6 v1.500 h-2 z" fill="#000"/><rect x="642" y="274.500" width="4" height="4" fill="#ddd"/>
<rect x="659.500" y="269" width="1" height="16" fill="#777"/><rect x="660.500" y="269" width="1" height="16" fill="#eee"/>
<rect x="695.500" y="269" width="1" height="16" fill="#777"/><rect x="696.500" y="269" width="1" height="16" fill="#eee"/>
<rect x="755" y="269" width="1" height="16" fill="#777"/><rect x="756" y="269" width="1" height="16" fill="#eee"/>
<path d="M673.500 272 Q675.800 273 675.800 276 V284.500 H680.200 V276 Q680.200 273 682.500 272 Z" fill="#fff"/><path d="M673.500 272 Q675.800 273 675.800 276 V284.500 M682.500 272 Q680.200 273 680.200 276 V284.500" fill="none" stroke="#111" stroke-width="1.300"/>
<path d="M706.500 271.500 L712.500 282 L719.500 271.500" fill="none" stroke="#eee" stroke-width="1.200"/><path d="M706 271 L712 281.500 L719 271" fill="none" stroke="#999" stroke-width=".8"/><circle cx="712.500" cy="281.500" r="2" fill="#c6c6c6" stroke="#999" stroke-width=".8"/>
<rect x="732.500" y="275.500" width="9" height="8.500" rx="2" fill="none" stroke="#f0f0f0" stroke-width="1.300"/><path d="M735 275 q0 -4 3 -3.500 q2 .5 1.500 3" fill="none" stroke="#f0f0f0" stroke-width="1.200"/><path d="M733 279 h8" stroke="#aaa" stroke-width=".8"/>
<rect x="766.500" y="271.500" width="11" height="11" fill="#e8e8f8" stroke="#1010c0" stroke-width="1.400"/><rect x="766" y="271" width="12" height="3" fill="#1010c0"/><g fill="#000"><rect x="771" y="276" width="3" height="2"/><rect x="776" y="275" width="4" height="2"/><rect x="771" y="280" width="3" height="2"/><rect x="776" y="280" width="4" height="2"/><rect x="774" y="283" width="6" height="1.500"/></g>
</svg>
<div class="a" style="left:665px;top:266px;width:24px;height:23px;box-sizing:border-box;border-top:1px solid #777;border-left:1px solid #777;border-right:1px solid #f4f4f4;border-bottom:1px solid #f4f4f4"></div>
<div class="a" style="left:622px;top:300px;width:174px;height:1px;background:#ececec;"></div>
<div class="a" style="left:622px;top:301px;width:174px;height:1px;background:#0a0a0a;"></div>
<div class="a" style="left:622px;top:302px;width:174px;height:1px;background:#3a3a3a;"></div>
<div class="a" style="left:621px;top:310px;width:175px;height:339px;box-sizing:border-box;border-top:1px solid #727272;border-left:1px solid #727272;border-right:1px solid #f4f4f4;border-bottom:1px solid #f4f4f4"></div>
<div class="a" style="left:622px;top:311px;width:1px;height:337px;background:#d4d4d4;"></div>
<div class="a" style="left:624px;top:323px;width:165px;height:196px;box-sizing:border-box;border:1px solid #808080;box-shadow:1px 1px 0 #f4f4f4, inset 1px 1px 0 #f4f4f4"></div>
<div class="a" style="left:628px;top:315px;width:158px;height:16px;background:#b8b8b8;box-sizing:border-box;border:1px solid #111"></div>
<span class="t" style="left:633.5px;top:316px;font-size:12px;color:#000;transform:scaleX(1.1250);transform-origin:0 0;">-</span>
<span class="t" style="left:681.0px;top:316px;font-size:12px;color:#000;transform:scaleX(0.8627);transform-origin:0 0;">Parameters</span>
<div class="a" style="left:707px;top:339px;width:53px;height:16px;background:#e3e3e3;box-sizing:border-box;border-top:2px solid #000;border-left:2px solid #000;border-right:1px solid #f0f0f0;border-bottom:1px solid #f0f0f0"></div>
<div class="a" style="left:763px;top:339px;width:11px;height:16px;background:#c6c6c6;box-sizing:border-box;border-top:1px solid #efefef;border-left:1px solid #efefef;border-right:1px solid #767676;border-bottom:1px solid #767676"></div>
<svg style="left:763px;top:339px" width="11" height="16"><path d="M2.5 6.0h6l-3-3.5z M2.5 10.0h6l-3 3.5z" fill="#000"/><rect x="1" y="7" width="9" height="1" fill="#909090" shape-rendering="crispEdges"/><rect x="1" y="8" width="9" height="1" fill="#ececec" shape-rendering="crispEdges"/></svg>
<span class="t" style="left:670.1px;top:339px;font-size:12px;color:#000;transform:scaleX(0.8725);transform-origin:0 0;">Length:</span>
<span class="t" style="left:711.0px;top:340px;font-size:12px;color:#000;transform:scaleX(0.8807);transform-origin:0 0;">0,5m</span>
<div class="a" style="left:707px;top:360px;width:53px;height:16px;background:#e3e3e3;box-sizing:border-box;border-top:2px solid #000;border-left:2px solid #000;border-right:1px solid #f0f0f0;border-bottom:1px solid #f0f0f0"></div>
<div class="a" style="left:763px;top:360px;width:11px;height:16px;background:#c6c6c6;box-sizing:border-box;border-top:1px solid #efefef;border-left:1px solid #efefef;border-right:1px solid #767676;border-bottom:1px solid #767676"></div>
<svg style="left:763px;top:360px" width="11" height="16"><path d="M2.5 6.0h6l-3-3.5z M2.5 10.0h6l-3 3.5z" fill="#000"/><rect x="1" y="7" width="9" height="1" fill="#909090" shape-rendering="crispEdges"/><rect x="1" y="8" width="9" height="1" fill="#ececec" shape-rendering="crispEdges"/></svg>
<span class="t" style="left:675.4px;top:360px;font-size:12px;color:#000;transform:scaleX(0.8714);transform-origin:0 0;">Width:</span>
<span class="t" style="left:711.0px;top:361px;font-size:12px;color:#000;transform:scaleX(0.8807);transform-origin:0 0;">0,5m</span>
<div class="a" style="left:707px;top:381px;width:53px;height:16px;background:#e3e3e3;box-sizing:border-box;border-top:2px solid #000;border-left:2px solid #000;border-right:1px solid #f0f0f0;border-bottom:1px solid #f0f0f0"></div>
<div class="a" style="left:763px;top:381px;width:11px;height:16px;background:#c6c6c6;box-sizing:border-box;border-top:1px solid #efefef;border-left:1px solid #efefef;border-right:1px solid #767676;border-bottom:1px solid #767676"></div>
<svg style="left:763px;top:381px" width="11" height="16"><path d="M2.5 6.0h6l-3-3.5z M2.5 10.0h6l-3 3.5z" fill="#000"/><rect x="1" y="7" width="9" height="1" fill="#909090" shape-rendering="crispEdges"/><rect x="1" y="8" width="9" height="1" fill="#ececec" shape-rendering="crispEdges"/></svg>
<span class="t" style="left:671.9px;top:381px;font-size:12px;color:#000;transform:scaleX(0.8715);transform-origin:0 0;">Height:</span>
<span class="t" style="left:711.0px;top:382px;font-size:12px;color:#000;transform:scaleX(0.8807);transform-origin:0 0;">2,8m</span>
<div class="a" style="left:707px;top:409px;width:53px;height:16px;background:#e3e3e3;box-sizing:border-box;border-top:2px solid #000;border-left:2px solid #000;border-right:1px solid #f0f0f0;border-bottom:1px solid #f0f0f0"></div>
<div class="a" style="left:763px;top:409px;width:11px;height:16px;background:#c6c6c6;box-sizing:border-box;border-top:1px solid #efefef;border-left:1px solid #efefef;border-right:1px solid #767676;border-bottom:1px solid #767676"></div>
<svg style="left:763px;top:409px" width="11" height="16"><path d="M2.5 6.0h6l-3-3.5z M2.5 10.0h6l-3 3.5z" fill="#000"/><rect x="1" y="7" width="9" height="1" fill="#909090" shape-rendering="crispEdges"/><rect x="1" y="8" width="9" height="1" fill="#ececec" shape-rendering="crispEdges"/></svg>
<span class="t" style="left:643.3px;top:409px;font-size:12px;color:#000;transform:scaleX(0.8723);transform-origin:0 0;">Length Segs:</span>
<span class="t" style="left:711.0px;top:410px;font-size:12px;color:#000;transform:scaleX(0.8721);transform-origin:0 0;">1</span>
<div class="a" style="left:707px;top:430px;width:53px;height:16px;background:#e3e3e3;box-sizing:border-box;border-top:2px solid #000;border-left:2px solid #000;border-right:1px solid #f0f0f0;border-bottom:1px solid #f0f0f0"></div>
<div class="a" style="left:763px;top:430px;width:11px;height:16px;background:#c6c6c6;box-sizing:border-box;border-top:1px solid #efefef;border-left:1px solid #efefef;border-right:1px solid #767676;border-bottom:1px solid #767676"></div>
<svg style="left:763px;top:430px" width="11" height="16"><path d="M2.5 6.0h6l-3-3.5z M2.5 10.0h6l-3 3.5z" fill="#000"/><rect x="1" y="7" width="9" height="1" fill="#909090" shape-rendering="crispEdges"/><rect x="1" y="8" width="9" height="1" fill="#ececec" shape-rendering="crispEdges"/></svg>
<span class="t" style="left:648.6px;top:430px;font-size:12px;color:#000;transform:scaleX(0.8717);transform-origin:0 0;">Width Segs:</span>
<span class="t" style="left:711.0px;top:431px;font-size:12px;color:#000;transform:scaleX(0.8721);transform-origin:0 0;">1</span>
<div class="a" style="left:707px;top:451px;width:53px;height:16px;background:#e3e3e3;box-sizing:border-box;border-top:2px solid #000;border-left:2px solid #000;border-right:1px solid #f0f0f0;border-bottom:1px solid #f0f0f0"></div>
<div class="a" style="left:763px;top:451px;width:11px;height:16px;background:#c6c6c6;box-sizing:border-box;border-top:1px solid #efefef;border-left:1px solid #efefef;border-right:1px solid #767676;border-bottom:1px solid #767676"></div>
<svg style="left:763px;top:451px" width="11" height="16"><path d="M2.5 6.0h6l-3-3.5z M2.5 10.0h6l-3 3.5z" fill="#000"/><rect x="1" y="7" width="9" height="1" fill="#909090" shape-rendering="crispEdges"/><rect x="1" y="8" width="9" height="1" fill="#ececec" shape-rendering="crispEdges"/></svg>
<span class="t" style="left:645.1px;top:451px;font-size:12px;color:#000;transform:scaleX(0.8718);transform-origin:0 0;">Height Segs:</span>
<span class="t" style="left:711.0px;top:452px;font-size:12px;color:#000;transform:scaleX(0.8721);transform-origin:0 0;">1</span>
<div class="a" style="left:635px;top:477px;width:13px;height:13px;background:#e2e2e2;box-sizing:border-box;border-top:2px solid #62686e;border-left:2px solid #62686e;border-right:1px solid #fff;border-bottom:1px solid #fff"></div>
<div class="a" style="left:635px;top:499px;width:13px;height:13px;background:#dadada;box-sizing:border-box;border-top:2px solid #62686e;border-left:2px solid #62686e;border-right:1px solid #fff;border-bottom:1px solid #fff"></div>
<svg style="left:635px;top:477px" width="13" height="13"><path d="M3.500 6 L5.800 8.800 L10 4" fill="none" stroke="#000" stroke-width="2.300"/></svg>
<span class="t" style="left:653.0px;top:477px;font-size:12px;color:#000;transform:scaleX(0.8776);transform-origin:0 0;">Generate Mapping Coords.</span>
<span class="t" style="left:653.0px;top:499px;font-size:12px;color:#000;transform:scaleX(0.8837);transform-origin:0 0;">Real-World Map Size</span>
<div class="a" style="left:1px;top:609px;width:616px;height:18px;background:#c6c6c6;"></div>
<div class="a" style="left:1px;top:609px;width:16px;height:17px;background:#c6c6c6;box-sizing:border-box;border-top:1px solid #efefef;border-left:1px solid #efefef;border-right:1px solid #767676;border-bottom:1px solid #767676"></div>
<div class="a" style="left:143px;top:609px;width:15px;height:17px;background:#c6c6c6;box-sizing:border-box;border-top:1px solid #efefef;border-left:1px solid #efefef;border-right:1px solid #767676;border-bottom:1px solid #767676"></div>
<div class="a" style="left:18px;top:609px;width:125px;height:17px;background:#c6c6c6;box-sizing:border-box;border-top:1px solid #f4f4f4;border-left:1px solid #f4f4f4;border-right:2px solid #111;border-bottom:2px solid #111"></div>
<span class="t" style="left:62.0px;top:610px;font-size:12px;color:#000;transform:scaleX(0.9544);transform-origin:0 0;">0 / 100</span>
<svg style="left:0;top:0" width="802" height="705"><path d="M10.200 613.800 L6.500 617.500 L10.200 621.200" fill="none" stroke="#111" stroke-width="1.100"/><path d="M148.800 613.800 L152.500 617.500 L148.800 621.200" fill="none" stroke="#111" stroke-width="1.100"/></svg>
<div class="a" style="left:1px;top:627px;width:616px;height:1px;background:#f4f4f4;"></div>
<div class="a" style="left:45px;top:653px;width:520px;height:1px;background:#ececec;"></div>
<svg style="left:0;top:0" width="802" height="705" viewBox="0 0 802 705" shape-rendering="crispEdges">
<rect x="50" y="629" width="9" height="25" fill="#8fb3d8" stroke="none"/><rect x="50.500" y="629.500" width="8" height="24" fill="none" stroke="#6690bf"/><rect x="54" y="629" width="1" height="25" fill="#2a5a96"/>
<rect x="64" y="629" width="1" height="11" fill="#707070"/>
<rect x="75" y="629" width="1" height="11" fill="#707070"/>
<rect x="85" y="629" width="1" height="11" fill="#707070"/>
<rect x="95" y="629" width="1" height="11" fill="#707070"/>
<rect x="105" y="629" width="1" height="12" fill="#707070"/><rect x="105" y="651" width="1" height="3" fill="#707070"/>
<rect x="116" y="629" width="1" height="11" fill="#707070"/>
<rect x="126" y="629" width="1" height="11" fill="#707070"/>
<rect x="136" y="629" width="1" height="11" fill="#707070"/>
<rect x="146" y="629" width="1" height="11" fill="#707070"/>
<rect x="156" y="629" width="1" height="12" fill="#707070"/><rect x="156" y="651" width="1" height="3" fill="#707070"/>
<rect x="166" y="629" width="1" height="11" fill="#707070"/>
<rect x="177" y="629" width="1" height="11" fill="#707070"/>
<rect x="187" y="629" width="1" height="11" fill="#707070"/>
<rect x="197" y="629" width="1" height="11" fill="#707070"/>
<rect x="207" y="629" width="1" height="12" fill="#707070"/><rect x="207" y="651" width="1" height="3" fill="#707070"/>
<rect x="218" y="629" width="1" height="11" fill="#707070"/>
<rect x="228" y="629" width="1" height="11" fill="#707070"/>
<rect x="238" y="629" width="1" height="11" fill="#707070"/>
<rect x="248" y="629" width="1" height="11" fill="#707070"/>
<rect x="258" y="629" width="1" height="12" fill="#707070"/><rect x="258" y="651" width="1" height="3" fill="#707070"/>
<rect x="268" y="629" width="1" height="11" fill="#707070"/>
<rect x="279" y="629" width="1" height="11" fill="#707070"/>
<rect x="289" y="629" width="1" height="11" fill="#707070"/>
<rect x="299" y="629" width="1" height="11" fill="#707070"/>
<rect x="309" y="629" width="1" height="12" fill="#707070"/><rect x="309" y="651" width="1" height="3" fill="#707070"/>
<rect x="320" y="629" width="1" height="11" fill="#707070"/>
<rect x="330" y="629" width="1" height="11" fill="#707070"/>
<rect x="340" y="629" width="1" height="11" fill="#707070"/>
<rect x="350" y="629" width="1" height="11" fill="#707070"/>
<rect x="360" y="629" width="1" height="12" fill="#707070"/><rect x="360" y="651" width="1" height="3" fill="#707070"/>
<rect x="370" y="629" width="1" height="11" fill="#707070"/>
<rect x="381" y="629" width="1" height="11" fill="#707070"/>
<rect x="391" y="629" width="1" height="11" fill="#707070"/>
<rect x="401" y="629" width="1" height="11" fill="#707070"/>
<rect x="411" y="629" width="1" height="12" fill="#707070"/><rect x="411" y="651" width="1" height="3" fill="#707070"/>
<rect x="422" y="629" width="1" height="11" fill="#707070"/>
<rect x="432" y="629" width="1" height="11" fill="#707070"/>
<rect x="442" y="629" width="1" height="11" fill="#707070"/>
<rect x="452" y="629" width="1" height="11" fill="#707070"/>
<rect x="462" y="629" width="1" height="12" fill="#707070"/><rect x="462" y="651" width="1" height="3" fill="#707070"/>
<rect x="472" y="629" width="1" height="11" fill="#707070"/>
<rect x="483" y="629" width="1" height="11" fill="#707070"/>
<rect x="493" y="629" width="1" height="11" fill="#707070"/>
<rect x="503" y="629" width="1" height="11" fill="#707070"/>
<rect x="513" y="629" width="1" height="12" fill="#707070"/><rect x="513" y="651" width="1" height="3" fill="#707070"/>
<rect x="524" y="629" width="1" height="11" fill="#707070"/>
<rect x="534" y="629" width="1" height="11" fill="#707070"/>
<rect x="544" y="629" width="1" height="11" fill="#707070"/>
<rect x="554" y="629" width="1" height="11" fill="#707070"/>
<rect x="564" y="629" width="1" height="12" fill="#707070"/><rect x="564" y="651" width="1" height="3" fill="#707070"/>
<g shape-rendering="auto"><rect x="14.500" y="633.500" width="16" height="5" fill="#d0d0d0" stroke="#111"/><path d="M16 636.500 q2 -2 4 0 t4 0 t4 0" stroke="#111" fill="none" stroke-width=".9"/><rect x="14.500" y="646.500" width="16" height="2.500" fill="#e4e4e4" stroke="#111"/><path d="M18.500 641 v4.500 M16.500 643 l2 -2 l2 2 M27.500 641 v4.500 M25.500 643.500 l2 2 l2 -2" stroke="#111" fill="none" stroke-width="1"/></g>
</svg>
<span class="t" style="left:51.5px;top:639px;font-size:12px;color:#12305c;transform:scaleX(0.8721);transform-origin:0 0;">0</span>
<span class="t" style="left:100.0px;top:639px;font-size:12px;color:#000;transform:scaleX(0.8721);transform-origin:0 0;">10</span>
<span class="t" style="left:151.0px;top:639px;font-size:12px;color:#000;transform:scaleX(0.8721);transform-origin:0 0;">20</span>
<span class="t" style="left:202.0px;top:639px;font-size:12px;color:#000;transform:scaleX(0.8721);transform-origin:0 0;">30</span>
<span class="t" style="left:253.0px;top:639px;font-size:12px;color:#000;transform:scaleX(0.8721);transform-origin:0 0;">40</span>
<span class="t" style="left:304.0px;top:639px;font-size:12px;color:#000;transform:scaleX(0.8721);transform-origin:0 0;">50</span>
<span class="t" style="left:355.0px;top:639px;font-size:12px;color:#000;transform:scaleX(0.8721);transform-origin:0 0;">60</span>
<span class="t" style="left:406.0px;top:639px;font-size:12px;color:#000;transform:scaleX(0.8721);transform-origin:0 0;">70</span>
<span class="t" style="left:457.0px;top:639px;font-size:12px;color:#000;transform:scaleX(0.8721);transform-origin:0 0;">80</span>
<span class="t" style="left:508.0px;top:639px;font-size:12px;color:#000;transform:scaleX(0.8721);transform-origin:0 0;">90</span>
<span class="t" style="left:556.1px;top:639px;font-size:12px;color:#000;transform:scaleX(0.8721);transform-origin:0 0;">100</span>
<div class="a" style="left:1px;top:654px;width:616px;height:50px;background:#c6c6c6;"></div>
<div class="a" style="left:3px;top:657px;width:36px;height:22px;background:#dcc0c0;box-sizing:border-box;border-top:1px solid #707070;border-left:1px solid #707070;border-right:1px solid #fff;border-bottom:1px solid #fff"></div>
<div class="a" style="left:3px;top:680px;width:36px;height:23px;background:#ffffff;box-sizing:border-box;border-top:1px solid #707070;border-left:1px solid #707070;border-right:1px solid #fff;border-bottom:1px solid #fff"></div>
<span class="t" style="left:14.0px;top:682px;font-size:12px;color:#000;transform:scaleX(0.9802);transform-origin:0 0;font-weight:bold;">:ex</span>
<div class="a" style="left:41px;top:656px;width:1px;height:48px;background:#f4f4f4;"></div>
<div class="a" style="left:44px;top:656px;width:1px;height:48px;background:#8a8a8a;"></div>
<div class="a" style="left:45px;top:656px;width:1px;height:48px;background:#f4f4f4;"></div>
<div class="a" style="left:47px;top:658px;width:49px;height:21px;background:#c6c6c6;box-sizing:border-box;border-top:1px solid #8a8a8a;border-left:1px solid #8a8a8a;border-right:1px solid #fff;border-bottom:1px solid #fff"></div>
<span class="t" style="left:54.0px;top:662px;font-size:12px;color:#000;transform:scaleX(0.8730);transform-origin:0 0;">1 Object</span>
<div class="a" style="left:47px;top:683px;width:313px;height:23px;background:#c6c6c6;box-sizing:border-box;border-top:1px solid #8a8a8a;border-left:1px solid #8a8a8a;border-right:1px solid #fff;border-bottom:1px solid #fff"></div>
<span class="t" style="left:53.0px;top:687px;font-size:12px;color:#000;transform:scaleX(0.8916);transform-origin:0 0;">Click and drag to select and move objects</span>
<span class="t" style="left:152.0px;top:662px;font-size:12px;color:#000;transform:scaleX(0.8727);transform-origin:0 0;">X:</span>
<div class="a" style="left:162px;top:659px;width:58px;height:20px;background:#e3e3e3;box-sizing:border-box;border-top:2px solid #000;border-left:2px solid #000;border-right:1px solid #fff;border-bottom:1px solid #fff"></div>
<span class="t" style="left:167.0px;top:662px;font-size:12px;color:#000;transform:scaleX(0.8998);transform-origin:0 0;">0,0m</span>
<div class="a" style="left:221px;top:660px;width:11px;height:17px;background:#c6c6c6;box-sizing:border-box;border-top:1px solid #efefef;border-left:1px solid #efefef;border-right:1px solid #767676;border-bottom:1px solid #767676"></div>
<svg style="left:221px;top:660px" width="11" height="17"><path d="M2.5 6.5h6l-3-3.5z M2.5 10.5h6l-3 3.5z" fill="#000"/><rect x="1" y="7" width="9" height="1" fill="#909090" shape-rendering="crispEdges"/><rect x="1" y="8" width="9" height="1" fill="#ececec" shape-rendering="crispEdges"/></svg>
<span class="t" style="left:234.0px;top:662px;font-size:12px;color:#000;transform:scaleX(0.8721);transform-origin:0 0;">Y:</span>
<div class="a" style="left:244px;top:659px;width:58px;height:20px;background:#e3e3e3;box-sizing:border-box;border-top:2px solid #000;border-left:2px solid #000;border-right:1px solid #fff;border-bottom:1px solid #fff"></div>
<span class="t" style="left:249.0px;top:662px;font-size:12px;color:#000;transform:scaleX(0.8998);transform-origin:0 0;">0,0m</span>
<div class="a" style="left:303px;top:660px;width:11px;height:17px;background:#c6c6c6;box-sizing:border-box;border-top:1px solid #efefef;border-left:1px solid #efefef;border-right:1px solid #767676;border-bottom:1px solid #767676"></div>
<svg style="left:303px;top:660px" width="11" height="17"><path d="M2.5 6.5h6l-3-3.5z M2.5 10.5h6l-3 3.5z" fill="#000"/><rect x="1" y="7" width="9" height="1" fill="#909090" shape-rendering="crispEdges"/><rect x="1" y="8" width="9" height="1" fill="#ececec" shape-rendering="crispEdges"/></svg>
<span class="t" style="left:316.0px;top:662px;font-size:12px;color:#000;transform:scaleX(0.8720);transform-origin:0 0;">Z:</span>
<div class="a" style="left:326px;top:659px;width:34px;height:20px;background:#e3e3e3;box-sizing:border-box;border-top:2px solid #000;border-left:2px solid #000;border-right:1px solid #fff;border-bottom:1px solid #fff"></div>
<span class="t" style="left:331.0px;top:662px;font-size:12px;color:#000;transform:scaleX(0.8998);transform-origin:0 0;">0,0m</span>
<svg style="left:0;top:0" width="802" height="705"><path d="M106.500 667 v-2.500 a2.500 2.500 0 0 1 5 0 v2.500" fill="none" stroke="#111" stroke-width="1.300"/><rect x="104" y="667" width="10" height="7" fill="#111"/><rect x="105" y="669" width="8" height="1" fill="#ccc"/><rect x="105" y="671.500" width="8" height="1" fill="#ccc"/><rect x="129.500" y="660.500" width="14" height="14" fill="#d0d0d0" stroke="#111"/><path d="M136.500 661 v13 M130 667.500 h13" stroke="#8a8a8a" stroke-width="1"/><circle cx="136.500" cy="667.500" r="2.300" fill="#8a8a8a" stroke="#111" stroke-width="1.200"/></svg>
<div class="a" style="left:360px;top:657px;width:43px;height:44px;background:#c6c6c6;box-sizing:border-box;border-top:1px solid #efefef;border-left:1px solid #efefef;border-right:1px solid #767676;border-bottom:1px solid #767676"></div>
<svg style="left:0;top:0" width="802" height="705"><circle cx="373.500" cy="678.500" r="4" fill="none" stroke="#000" stroke-width="1.800"/><path d="M378 678.500 H393" stroke="#000" stroke-width="2"/><path d="M387 679 v4 h2 v-2 h2 v3 h2 v-5z" fill="#000"/></svg>
<div class="a" style="left:404px;top:656px;width:1px;height:46px;background:#8a8a8a;"></div>
<div class="a" style="left:407px;top:657px;width:47px;height:22px;background:#c6c6c6;box-sizing:border-box;border-top:1px solid #efefef;border-left:1px solid #efefef;border-right:1px solid #767676;border-bottom:1px solid #767676"></div>
<div class="a" style="left:407px;top:680px;width:47px;height:21px;background:#c6c6c6;box-sizing:border-box;border-top:1px solid #efefef;border-left:1px solid #efefef;border-right:1px solid #767676;border-bottom:1px solid #767676"></div>
<span class="t" style="left:409.0px;top:662px;font-size:12px;color:#000;transform:scaleX(0.8835);transform-origin:0 0;">Auto Key</span>
<span class="t" style="left:412.0px;top:684px;font-size:12px;color:#000;transform:scaleX(0.8810);transform-origin:0 0;">Set Key</span>
<div class="a" style="left:457px;top:657px;width:115px;height:20px;background:#e3e3e3;box-sizing:border-box;border-top:2px solid #6a6a6a;border-left:2px solid #6a6a6a;border-right:1px solid #fff;border-bottom:1px solid #fff"></div>
<div class="a" style="left:554px;top:659px;width:16px;height:17px;background:#ececec;box-sizing:border-box;border-top:1px solid #fff;border-left:1px solid #fff;border-right:2px solid #707070;border-bottom:2px solid #707070"></div>
<svg style="left:554px;top:659px" width="16" height="17"><path d="M3.500 6h8l-4 4.500z" fill="#000"/></svg>
<span class="t" style="left:461.0px;top:661px;font-size:12px;color:#000;transform:scaleX(0.8996);transform-origin:0 0;">Selected</span>
<svg style="left:0;top:0" width="802" height="705"><path d="M463 684.500 h13 M460 696.500 h11" stroke="#8080d0" stroke-width="1.600"/><path d="M461 686 L465 696 L470 685 L474 691" fill="none" stroke="#d01818" stroke-width="1.300"/><rect x="468.500" y="684" width="2" height="2" fill="#222"/><rect x="464" y="695.500" width="2" height="2" fill="#222"/><path d="M478.500 695 v4 h-4 z" fill="#fff"/></svg>
<div class="a" style="left:484px;top:680px;width:89px;height:21px;background:#c6c6c6;box-sizing:border-box;border-top:1px solid #efefef;border-left:1px solid #efefef;border-right:1px solid #767676;border-bottom:1px solid #767676"></div>
<span class="t" style="left:500.0px;top:684px;font-size:12px;color:#000;transform:scaleX(0.8476);transform-origin:0 0;">Key Filters...</span>
<div class="a" style="left:618px;top:653px;width:182px;height:1px;background:#707070;"></div>
<div class="a" style="left:618px;top:654px;width:181px;height:1px;background:#e4e4e4;"></div>
<div class="a" style="left:799px;top:653px;width:1px;height:51px;background:#707070;"></div>
<svg style="left:0;top:0" width="802" height="705" viewBox="0 0 802 705" >
<g fill="#000">
<rect x="581" y="663" width="2" height="9"/><path d="M583 667.500 l6.500 -4 v8z M590 667.500 l7 -4 v8z"/>
<path d="M608.500 667.500 l7 -4 v8z"/><rect x="616.300" y="663.500" width="1.800" height="8"/><rect x="619.500" y="663.500" width="1.800" height="8"/>
<rect x="631.500" y="661" width="14" height="13.500" fill="none" stroke="#000" stroke-width="2"/><path d="M635.500 664 l7 3.700 l-7 3.700z"/><path d="M648 672.500 v3.500 h-3.500z"/>
<rect x="653.300" y="663.500" width="1.800" height="8"/><rect x="656.500" y="663.500" width="1.800" height="8"/><path d="M659 663.500 l7 4 l-7 4z"/>
<path d="M679.500 663.500 l6.500 4 l-6.500 4z M686.500 663.500 l6.500 4 l-6.500 4z"/><rect x="693" y="663" width="2" height="9"/>
<rect x="584" y="685" width="1.600" height="8.500"/><rect x="594.400" y="685" width="1.600" height="8.500"/><path d="M585.500 689.200 l4 -3.500 v7z M594.500 689.200 l-4 -3.500 v7z"/>
</g>
<rect x="602" y="659" width="1" height="18" fill="#777"/><rect x="603" y="659" width="1" height="18" fill="#eee"/>
<rect x="674" y="659" width="1" height="18" fill="#777"/><rect x="675" y="659" width="1" height="18" fill="#eee"/>
<rect x="703" y="659" width="1" height="18" fill="#777"/><rect x="704" y="659" width="1" height="18" fill="#eee"/>
<rect x="602" y="682" width="1" height="18" fill="#777"/><rect x="603" y="682" width="1" height="18" fill="#eee"/>
<rect x="703" y="682" width="1" height="18" fill="#777"/><rect x="704" y="682" width="1" height="18" fill="#eee"/>
<rect x="685.500" y="683.500" width="9.500" height="10" fill="none" stroke="#111"/><rect x="685" y="683" width="10.500" height="2.500" fill="#111"/><circle cx="694" cy="690.500" r="4" fill="#c6c6c6" stroke="#b01020" stroke-width="1" stroke-dasharray="1.500 .8"/><path d="M694 688 v2.500 h2.500" stroke="#111" fill="none" stroke-width=".9"/>
<circle cx="714.300" cy="664.500" r="4.300" fill="#e4e8f0" stroke="#18188a" stroke-width="1.200"/><path d="M717.500 668 l5.500 6" stroke="#18188a" stroke-width="2"/>
<g fill="none" stroke="#a01c28" stroke-width="1.100"><rect x="734.500" y="660.500" width="12.500" height="10"/><path d="M740.700 660.500 v10 M734.500 665.500 h12.500"/></g><circle cx="735" cy="668.500" r="3.400" fill="#e4e8f0" stroke="#18188a" stroke-width="1.200"/><path d="M737.500 671.300 l3.500 3.500" stroke="#18188a" stroke-width="1.800"/>
<g fill="none" stroke="#111" stroke-width="1.300"><path d="M754.500 664 v-3.500 h3.500 M766.500 660.500 h3.500 v3.500 M770 671 v3.500 h-3.500 M758 674.500 h-3.500 v-3.500"/></g><rect x="757.500" y="664.500" width="8" height="8" fill="#e8e8f4" stroke="#18188a" stroke-width="1.200"/><path d="M757.500 664.500 l2.500 -2.500 h8 v8 l-2.500 2.500 M765.500 664.500 l2.500 -2.500" fill="none" stroke="#18188a" stroke-width="1.100"/><path d="M773 674 v3.500 h-3.500z" fill="#000"/>
<g fill="none" stroke="#a01c28" stroke-width="1.100"><rect x="780.500" y="660.500" width="12.500" height="10"/><path d="M786.700 660.500 v10 M780.500 665.500 h12.500"/></g><rect x="777.500" y="667.500" width="7" height="7" fill="#e8e8f4" stroke="#18188a" stroke-width="1.200"/><path d="M777.500 667.500 l2.500 -2.500 h7 v7 l-2.500 2.500 M784.500 667.500 l2.500 -2.500" fill="none" stroke="#18188a" stroke-width="1.100"/><path d="M796 674 v3.500 h-3.500z" fill="#000"/>
<path d="M709 683.500 L715 686.300 Q712.500 690 715 693.700 L709 696.500 Z" fill="#e4e4e4"/><path d="M709 683.500 L723 690 L709 696.500" fill="none" stroke="#111" stroke-width="1.300"/><path d="M715 686.500 q-3 3.500 0 7.300" fill="none" stroke="#111" stroke-width="1"/><path d="M726 695 v3.500 h-3.500z" fill="#000"/>
<path d="M735 690 l-2.500 -2.500 q-1 -1.500 .5 -2 l3 2 v-4 q1 -1.500 2 0 v-1.500 q1 -1.500 2.200 0 v1 q1 -1.500 2.200 0 v2 q1 -1.500 2 0 v6 q0 3 -2 5 h-6 q-2 -2 -3.400 -6z" fill="#e6e6e6" stroke="#111" stroke-width="1"/><path d="M749 695 v3.500 h-3.500z" fill="#000"/>
<circle cx="761" cy="691" r="4.500" fill="none" stroke="#111" stroke-width="1.200"/><path d="M761 682 v9 l-6.500 6 M761 691 h9" stroke="#18188a" stroke-width="1.200" fill="none"/><path d="M761 681 l-2 3 h4z M771.500 691 l-3 -2 v4z M753.500 698 l1 -3.500 l2.500 2.500z" fill="#18188a"/><path d="M773 695 v3.500 h-3.500z" fill="#000"/>
<rect x="785.500" y="690.500" width="7" height="6.500" fill="none" stroke="#111" stroke-width="1.200"/><rect x="778.500" y="683.500" width="11" height="11" fill="#c6c6c6" stroke="#18188a" stroke-width="1.300"/><path d="M781.500 686.500 l5 5 M781.500 686.500 h3 M781.500 686.500 v3" stroke="#111" fill="none" stroke-width=".9"/>
</svg>
<div class="a" style="left:605px;top:680px;width:62px;height:21px;background:#e3e3e3;box-sizing:border-box;border-top:2px solid #000;border-left:2px solid #000;border-right:1px solid #fff;border-bottom:1px solid #fff"></div>
<span class="t" style="left:609.0px;top:683px;font-size:12px;color:#000;transform:scaleX(0.8721);transform-origin:0 0;">0</span>
<div class="a" style="left:669px;top:682px;width:11px;height:17px;background:#c6c6c6;box-sizing:border-box;border-top:1px solid #efefef;border-left:1px solid #efefef;border-right:1px solid #767676;border-bottom:1px solid #767676"></div>
<svg style="left:669px;top:682px" width="11" height="17"><path d="M2.5 6.5h6l-3-3.5z M2.5 10.5h6l-3 3.5z" fill="#000"/><rect x="1" y="7" width="9" height="1" fill="#909090" shape-rendering="crispEdges"/><rect x="1" y="8" width="9" height="1" fill="#ececec" shape-rendering="crispEdges"/></svg>
<div class="a" style="left:0px;top:0px;width:802px;height:1px;background:#2d4957;"></div>
<div class="a" style="left:0px;top:0px;width:1px;height:705px;background:#2d4957;"></div>
<div class="a" style="left:801px;top:0px;width:1px;height:705px;background:#2d4957;"></div>
<div class="a" style="left:0px;top:704px;width:802px;height:1px;background:#2d4957;"></div>
</body></html>
